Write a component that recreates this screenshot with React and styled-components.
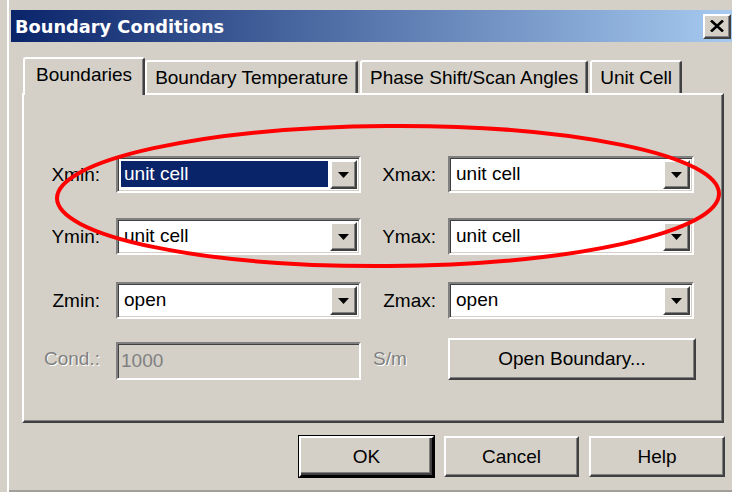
import styled, { createGlobalStyle, css } from "styled-components"

const GlobalStyle = createGlobalStyle`
    html, body {
        margin: 0;
        padding: 0;
        background: #d4d0c8;
    }
`

// classic 3D edges
const raised = css`
    border: 2px solid;
    border-color: #ffffff #404040 #404040 #ffffff;
    box-shadow: inset -1px -1px 0 #808080;
    background: #d4d0c8;
`

const sunken = css`
    border: 2px solid;
    border-color: #808080 #ffffff #ffffff #808080;
    box-shadow: inset 1px 1px 0 #404040, inset -1px -1px 0 #d4d0c8;
`

const Window = styled.div`
    position: relative;
    width: 732px;
    height: 492px;
    box-sizing: border-box;
    padding: 10px 0 0 11px;
    background: #d4d0c8;
    box-shadow: inset 7px 0 0 #d4d0c8, inset 9px 0 0 #ffffff, inset 0 -2px 0 #a29f98;
    font-family: "Liberation Sans", Arial, sans-serif;
    font-size: 19px;
    color: #000;
    overflow: hidden;
`

const TitleBar = styled.div`
    display: flex;
    align-items: center;
    justify-content: space-between;
    height: 32px;
    padding: 0 1px 0 4px;
    background: linear-gradient(to right, #0a246a, #a6caf0);
`

const TitleText = styled.span`
    font-family: "DejaVu Sans", Verdana, sans-serif;
    font-weight: bold;
    font-size: 17.8px;
    color: #fff;
`

const CloseButton = styled.div`
    ${raised}
    width: 28px;
    height: 25px;
    box-sizing: border-box;
    display: flex;
    align-items: center;
    justify-content: center;
`

const Body = styled.div`
    padding: 15px 8px 0 11px;
`

const TabStrip = styled.div`
    display: flex;
    align-items: flex-end;
    gap: 2px;
    height: 36px;
    padding-left: 1px;
`

const Tab = styled.div`
    position: relative;
    z-index: ${p => p.$active ? 1 : 0};
    box-sizing: border-box;
    height: ${p => p.$active ? 38 : 33}px;
    margin: 0 ${p => p.$active ? -2 : 0}px ${p => p.$active ? -2 : 0}px 0;
    padding: 0 ${p => p.$active ? 11 : 8}px ${p => p.$active ? 4 : 0}px;
    display: flex;
    align-items: center;
    white-space: nowrap;
    background: #d4d0c8;
    border-top: 2px solid #fff;
    border-left: 2px solid #fff;
    border-right: 2px solid #404040;
    border-radius: 3px 3px 0 0;
    box-shadow: inset -1px 0 0 #808080;
`

const Panel = styled.div`
    height: 330px;
    box-sizing: border-box;
    border: 2px solid;
    border-color: #ffffff #404040 #404040 #ffffff;
    box-shadow: inset -1px -1px 0 #808080;
    padding: 61px 0 0 16px;
`

const Row = styled.div`
    display: flex;
    align-items: center;
    height: ${p => p.$height || 37}px;
    margin-top: ${p => p.$top || 0}px;
`

const Label = styled.div`
    width: ${p => p.$width}px;
    box-sizing: border-box;
    flex-shrink: 0;
    text-align: ${p => p.$left ? "left" : "right"};
    padding: ${p => p.$left ? "0 0 0 12px" : `0 ${p.$gap}px 0 0`};
    color: ${p => p.$disabled ? "#808080" : "#000"};
    text-shadow: ${p => p.$disabled ? "1px 1px 0 #fff" : "none"};
`

const Combo = styled.div`
    ${sunken}
    width: ${p => p.$width}px;
    height: 37px;
    box-sizing: border-box;
    flex-shrink: 0;
    display: flex;
    padding: 2px;
    background: #fff;
`

const ComboValue = styled.div`
    flex: 1;
    display: flex;
    align-items: center;
    margin: 1px 2px 2px 1px;
    padding-left: 3px;
    background: ${p => p.$selected ? "#0a246a" : "transparent"};
    color: ${p => p.$selected ? "#fff" : "#000"};
`

const ArrowButton = styled.div`
    ${raised}
    width: 27px;
    box-sizing: border-box;
    display: flex;
    align-items: center;
    justify-content: center;
`

const TextField = styled.div`
    ${sunken}
    align-self: flex-end;
    width: 245px;
    height: 38px;
    box-sizing: border-box;
    flex-shrink: 0;
    display: flex;
    align-items: center;
    padding-left: 3px;
    background: #d4d0c8;
    color: #808080;
`

const Button = styled.div`
    ${raised}
    width: ${p => p.$width}px;
    height: ${p => p.$height || 41}px;
    box-sizing: border-box;
    flex-shrink: 0;
    display: flex;
    align-items: center;
    justify-content: center;
    ${p => p.$default && css`
        border-color: #ffffff #000 #000 #ffffff;
        box-shadow: inset -2px -2px 0 #404040, inset -3px -3px 0 #808080, 0 0 0 1px #000;
    `}
`

const Footer = styled.div`
    display: flex;
    justify-content: flex-end;
    gap: 10px;
    margin: 13px -1px 0 0;
`

const Highlight = styled.svg`
    position: absolute;
    left: 0;
    top: 0;
    pointer-events: none;
`

const Arrow = () => (
    <svg width="11" height="6" viewBox="0 0 11 6">
        <polygon points="0,0 11,0 5.5,6" fill="#000" />
    </svg>
)

const Dropdown = ({ value, selected, width = 245 }) => (
    <Combo $width={width}>
        <ComboValue $selected={selected}>{value}</ComboValue>
        <ArrowButton><Arrow /></ArrowButton>
    </Combo>
)

const App = () => {
    const tabs = ["Boundaries", "Boundary Temperature", "Phase Shift/Scan Angles", "Unit Cell"]

    return (
        <>
            <GlobalStyle />
            <Window>
                <TitleBar>
                    <TitleText>Boundary Conditions</TitleText>
                    <CloseButton>
                        <svg width="14" height="12" viewBox="0 0 14 12">
                            <path d="M1 0.5 L13 11.5 M13 0.5 L1 11.5" stroke="#000" strokeWidth="2.6" />
                        </svg>
                    </CloseButton>
                </TitleBar>

                <Body>
                    <TabStrip>
                        {tabs.map((t, i) => (
                            <Tab key={t} $active={i === 0}>{t}</Tab>
                        ))}
                    </TabStrip>

                    <Panel>
                        <Row>
                            <Label $width={76} $gap={16}>Xmin:</Label>
                            <Dropdown value="unit cell" selected />
                            <Label $width={87} $gap={12}>Xmax:</Label>
                            <Dropdown value="unit cell" width={246} />
                        </Row>
                        <Row $top={25}>
                            <Label $width={76} $gap={16}>Ymin:</Label>
                            <Dropdown value="unit cell" />
                            <Label $width={87} $gap={12}>Ymax:</Label>
                            <Dropdown value="unit cell" width={246} />
                        </Row>
                        <Row $top={27}>
                            <Label $width={76} $gap={16}>Zmin:</Label>
                            <Dropdown value="open" />
                            <Label $width={87} $gap={12}>Zmax:</Label>
                            <Dropdown value="open" width={246} />
                        </Row>
                        <Row $top={19} $height={42}>
                            <Label $width={76} $gap={16} $disabled>Cond.:</Label>
                            <TextField>1000</TextField>
                            <Label $width={87} $left $disabled>S/m</Label>
                            <Button $width={248} $height={42}>Open Boundary...</Button>
                        </Row>
                    </Panel>

                    <Footer>
                        <Button $width={135} $default>OK</Button>
                        <Button $width={135}>Cancel</Button>
                        <Button $width={136}>Help</Button>
                    </Footer>
                </Body>

                <Highlight width="732" height="492" viewBox="0 0 732 492">
                    <ellipse cx="388" cy="196" rx="331" ry="70" transform="rotate(-0.4 388 196)" fill="none" stroke="#ff0000" strokeWidth="4" />
                </Highlight>
            </Window>
        </>
    )
}

export default App
